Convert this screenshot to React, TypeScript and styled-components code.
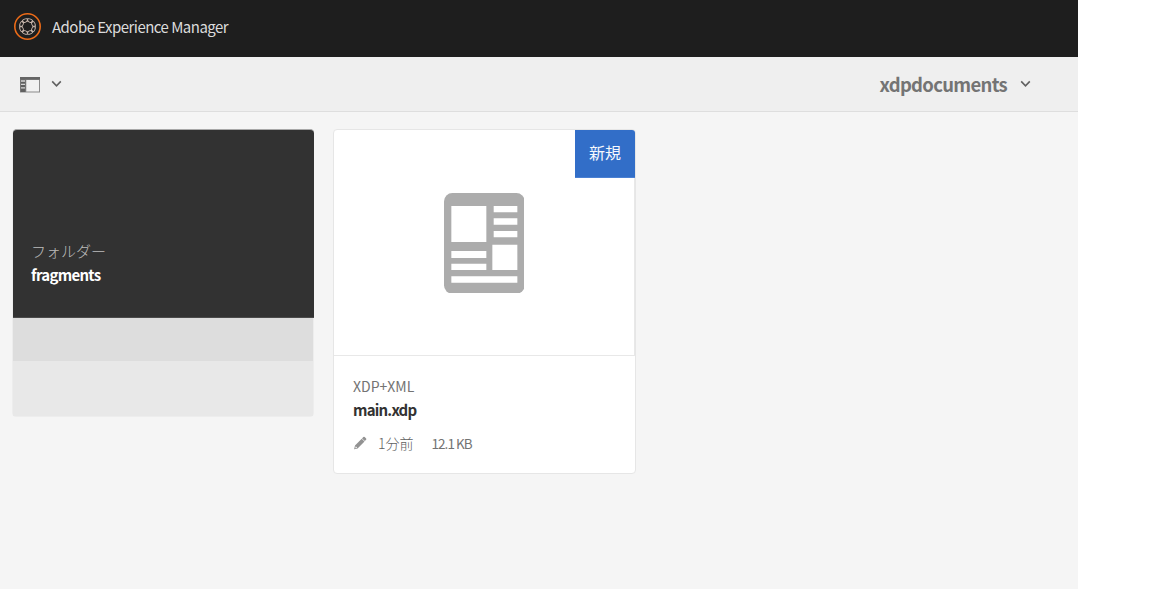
import React from "react";
import styled, { createGlobalStyle } from "styled-components";

const GlobalStyle = createGlobalStyle`
  * { box-sizing: border-box; }
  body {
    margin: 0;
    background: #fff;
    font-family: "Noto Sans CJK JP", "Noto Sans", sans-serif;
  }
`;

const Shell = styled.div`
  width: 1078px;
  height: 589px;
  display: flex;
  flex-direction: column;
  background: #f5f5f5;
  overflow: hidden;
`;

const Header = styled.header`
  flex: none;
  height: 57px;
  display: flex;
  align-items: center;
  gap: 11px;
  padding: 0 13px 3px;
  background: #1e1e1e;
`;

const ActionBar = styled.div`
  flex: none;
  height: 55px;
  display: flex;
  align-items: center;
  justify-content: space-between;
  padding: 0 47px 0 19px;
  background: #efefef;
  border-bottom: 1px solid #dedede;
`;

const BarButton = styled.button<{ $gap: number }>`
  display: flex;
  align-items: center;
  gap: ${(p) => p.$gap}px;
  padding: 0;
  border: 0;
  background: none;
  font: inherit;
`;

const Label = styled.span<{
  $size: number;
  $color: string;
  $weight?: number;
  $line: number;
  $spacing?: number;
}>`
  display: block;
  white-space: nowrap;
  font-size: ${(p) => p.$size}px;
  line-height: ${(p) => p.$line}px;
  font-weight: ${(p) => p.$weight ?? 400};
  letter-spacing: ${(p) => p.$spacing ?? 0}px;
  color: ${(p) => p.$color};
`;

const CardGrid = styled.main`
  display: flex;
  align-items: flex-start;
  gap: 19px;
  padding: 17px 12px;
`;

const Card = styled.article`
  width: 302px;
  border: 1px solid #e6e6e6;
  border-radius: 4px;
`;

const FolderCard = styled(Card)`
  border-color: #ededed;
`;

const FileCard = styled(Card)`
  width: 303px;
  background: #fff;
  overflow: hidden;
`;

const FolderFace = styled.div`
  height: 189px;
  margin: -1px -1px 0 0;
  padding: 109px 18px 0;
  background: #323232;
  border-top: 1px solid #a8a8a8;
  border-bottom: 1px solid #4b4b4b;
  border-radius: 4px 4px 0 0;
`;

const FolderStrip = styled.div<{ $height: number; $color: string }>`
  height: ${(p) => p.$height}px;
  background: ${(p) => p.$color};
`;

const Preview = styled.div`
  position: relative;
  height: 226px;
  display: flex;
  align-items: center;
  justify-content: center;
  padding-top: 1px;
  border-right: 1px solid #e8e8e8;
  border-bottom: 1px solid #e8e8e8;
`;

const NewBadge = styled.div`
  position: absolute;
  top: 0;
  right: -1px;
  width: 60px;
  height: 48px;
  display: flex;
  justify-content: center;
  padding-top: 10px;
  background: #326ec8;
  border-bottom: 1px solid #4a80d3;
`;

const FileInfo = styled.div`
  height: 117px;
  padding: 18px 19px 0;
`;

const MetaRow = styled.div`
  display: flex;
  align-items: center;
  margin-top: 11px;
`;

const MetaText = styled.div<{ $before: number }>`
  margin-left: ${(p) => p.$before}px;
`;

const links = Array.from({ length: 8 }, (_, i) => {
  const angle = ((i * 45 + 22.5) * Math.PI) / 180;
  return { x: 14.5 + 6.4 * Math.cos(angle), y: 13.5 + 6.4 * Math.sin(angle), turn: i * 45 + 22.5 };
});

const BrandLogo = () => (
  <svg width="28" height="28" viewBox="0 0 28 28" fill="none">
    <circle cx="14.5" cy="13.5" r="12.7" stroke="#eb6b18" strokeWidth="1.6" />
    {links.map((l) => (
      <ellipse
        key={l.turn}
        cx={l.x}
        cy={l.y}
        rx="1.6"
        ry="3"
        stroke="#c9b8ae"
        strokeWidth="0.9"
        transform={`rotate(${l.turn} ${l.x} ${l.y})`}
      />
    ))}
  </svg>
);

const RailIcon = () => (
  <svg width="22" height="18" viewBox="0 0 22 18">
    <path d="M1 2h20v15.5H1z" fill="#8a8a8a" />
    <path d="M1 2h20v2.6H1z" fill="#656565" />
    <path d="M1.5 4.5h5V17h-5z" fill="#606060" />
    <path d="M7.3 5H20v11.5H7.3z" fill="#f1f1f1" />
    <path d="M2 6h4M2 9.4h4M2 12.8h4" stroke="#d5d5d5" strokeWidth="1.3" />
  </svg>
);

const Chevron = () => (
  <svg width="11" height="8" viewBox="0 0 11 8" fill="none">
    <path d="M1.2 1.4 5.5 5.8 9.8 1.4" stroke="#606060" strokeWidth="1.6" />
  </svg>
);

const DocumentIcon = () => (
  <svg width="80.7" height="100.7" viewBox="41 39 242 302">
    <rect x="41" y="39" width="242" height="302" rx="25" fill="#acacac" />
    <path
      fill="#fff"
      d="M63 78h105v108H63zM190 78h71v19h-71zM190 115h71v19h-71zM190 153h71v19h-71zM186 194h75v76h-75zM63 213h105v21H63zM63 251h105v19H63zM63 289h198v19H63z"
    />
  </svg>
);

const PencilIcon = () => (
  <svg width="14" height="14" viewBox="0 0 14 14" fill="#929292">
    <path d="M10.3 1.1q.7-.7 1.4 0l1.4 1.4q.6.6 0 1.2l-1.3 1.3-2.8-2.6z" />
    <path d="M8.7 2.7 11.5 5.5 4.6 12.4 1.1 13.3 2 9.5zM2.8 10.2l-.5 2 1.8-.5z" fillRule="evenodd" />
  </svg>
);

export default function App() {
  return (
    <>
      <GlobalStyle />
      <Shell>
        <Header>
          <BrandLogo />
          <Label $size={15} $line={24} $color="#dcdcdc" $spacing={-0.53}>
            Adobe Experience Manager
          </Label>
        </Header>
        <ActionBar>
          <BarButton $gap={10}>
            <RailIcon />
            <Chevron />
          </BarButton>
          <BarButton $gap={13}>
            <Label $size={18.5} $line={28} $weight={700} $color="#747474" $spacing={-0.7}>
              xdpdocuments
            </Label>
            <Chevron />
          </BarButton>
        </ActionBar>
        <CardGrid>
          <FolderCard>
            <FolderFace>
              <Label $size={15} $line={24} $weight={300} $color="#bcbcbc">
                フォルダー
              </Label>
              <Label $size={15} $line={24} $weight={700} $color="#fff" $spacing={-0.7}>
                fragments
              </Label>
            </FolderFace>
            <FolderStrip $height={43} $color="#dddddd" />
            <FolderStrip $height={55} $color="#e8e8e8" />
          </FolderCard>
          <FileCard>
            <Preview>
              <DocumentIcon />
              <NewBadge>
                <Label $size={16} $line={24} $color="#f5f8fd">
                  新規
                </Label>
              </NewBadge>
            </Preview>
            <FileInfo>
              <Label $size={14} $line={24} $color="#737373">
                XDP+XML
              </Label>
              <Label $size={15} $line={24} $weight={700} $color="#323232" $spacing={-0.8}>
                main.xdp
              </Label>
              <MetaRow>
                <PencilIcon />
                <MetaText $before={11}>
                  <Label $size={14} $line={20} $weight={300} $color="#606060">
                    1分前
                  </Label>
                </MetaText>
                <MetaText $before={18}>
                  <Label $size={13.5} $line={20} $color="#737373" $spacing={-0.95}>
                    12.1 KB
                  </Label>
                </MetaText>
              </MetaRow>
            </FileInfo>
          </FileCard>
        </CardGrid>
      </Shell>
    </>
  );
}
